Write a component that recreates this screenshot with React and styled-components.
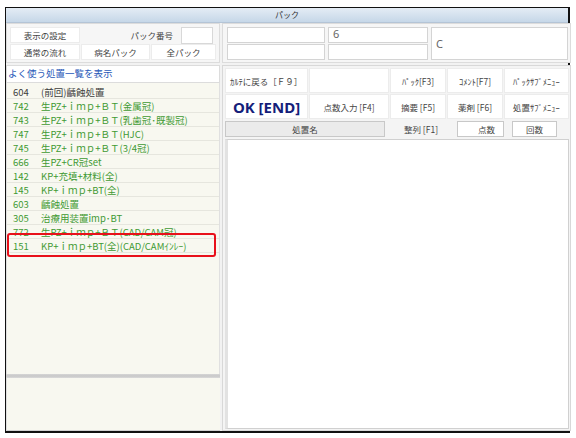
import React from "react";
import styled, { createGlobalStyle } from "styled-components";

const GlobalStyle = createGlobalStyle`
  html, body {
    margin: 0;
    padding: 0;
    background: #ffffff;
    font-family: "Noto Sans CJK JP", "Noto Sans", sans-serif;
  }
`;

const Page = styled.div`
  width: 576px;
  height: 438px;
  padding: 7px 0 0 5px;
  box-sizing: border-box;
`;

const Window = styled.div`
  position: relative;
  width: 565px;
  height: 426px;
  box-sizing: border-box;
  border: 1px solid #111;
  border-right-width: 2px;
  border-bottom-width: 2px;
  background: #f2f2f2;
  display: flex;
  flex-direction: column;
`;

const TitleBar = styled.div`
  height: 14px;
  background: linear-gradient(#e4ecf5, #c6d7e8);
  border-bottom: 1px solid #b4c4d6;
  font-size: 8px;
  line-height: 14px;
  color: #333;
  text-align: center;
`;

const Body = styled.div`
  flex: 1;
  display: flex;
  gap: 2px;
  min-height: 0;
`;

const LeftCol = styled.div`
  width: 214px;
  display: flex;
  flex-direction: column;
`;

const RightCol = styled.div`
  flex: 1;
  display: flex;
  flex-direction: column;
`;

const TopBlock = styled.div`
  height: 40px;
  box-sizing: border-box;
  border: 1px solid #dcdcdc;
  background: #f6f6f6;
  padding: 3px 2px 2px 3px;
  display: flex;
  flex-direction: column;
  gap: 1px;
`;

const TopRow = styled.div`
  display: flex;
  align-items: center;
  height: 16px;
`;

const FlatButton = styled.div`
  width: ${(p) => p.$w}px;
  height: 16px;
  box-sizing: border-box;
  background: #fff;
  border: 1px solid #ececec;
  font-size: 8.5px;
  color: #444;
  display: flex;
  align-items: center;
  justify-content: center;
  margin-right: 1px;
`;

const Label = styled.div`
  flex: 1;
  text-align: right;
  font-size: 8.5px;
  color: #444;
  padding-right: 8px;
`;

const SmallInput = styled.div`
  width: 32px;
  height: 17px;
  box-sizing: border-box;
  background: #fff;
  border: 1px solid #d8d8d8;
  margin-right: 4px;
`;

const ListHeader = styled.div`
  margin-top: 2px;
  height: 16px;
  background: #fff;
  border: 1px solid #dcdcdc;
  color: #2858b8;
  font-size: 9.5px;
  line-height: 15px;
  padding-left: 1px;
`;

const ListArea = styled.div`
  position: relative;
  flex: 1;
  background: #f8f8f0;
  border-left: 1px solid #e0e0e0;
  border-right: 1px solid #e0e0e0;
  padding-top: 2px;
`;

const Row = styled.div`
  height: 14px;
  display: flex;
  align-items: center;
  border-bottom: 1px solid #e6e6de;
  font-size: 9.5px;
  color: ${(p) => (p.$green ? "#3f9a33" : "#3c3c3c")};
  white-space: nowrap;
  overflow: hidden;
  box-sizing: border-box;
`;

const Code = styled.span`
  width: 34px;
  padding-left: 6px;
  box-sizing: border-box;
  flex-shrink: 0;
`;

const Highlight = styled.div`
  position: absolute;
  left: 0px;
  top: 150px;
  width: 209px;
  height: 24px;
  box-sizing: border-box;
  border: 2.5px solid #e8101a;
  border-radius: 3px;
`;

const Splitter = styled.div`
  height: 4px;
  background: linear-gradient(#d6d6d6, #c8c8c8, #dadada);
`;

const LowerArea = styled.div`
  height: 52px;
  background: #f8f8f0;
  border-bottom: 1px solid #d0d0d0;
  border-left: 1px solid #e0e0e0;
`;

const InfoBlock = styled.div`
  height: 40px;
  box-sizing: border-box;
  border: 1px solid #dcdcdc;
  background: #f6f6f6;
  padding: 3px 2px 2px 4px;
  display: flex;
  gap: 3px;
`;

const InfoStack = styled.div`
  width: ${(p) => p.$w}px;
  display: flex;
  flex-direction: column;
  gap: 1px;
`;

const InfoBox = styled.div`
  flex: ${(p) => (p.$grow ? 1 : "none")};
  height: ${(p) => (p.$grow ? "auto" : "16px")};
  box-sizing: border-box;
  background: #fff;
  border: 1px solid #d4d4d4;
  font-family: "Noto Sans", sans-serif;
  font-size: 11px;
  color: #666;
  padding-left: 4px;
  display: flex;
  align-items: ${(p) => (p.$grow ? "center" : "flex-start")};
  line-height: 12px;
`;

const CommandPanel = styled.div`
  margin-top: 2px;
  flex: 1;
  border: 1px solid #d8d8d8;
  padding: 2px 1px 1px 2px;
  display: flex;
  flex-direction: column;
  background: #f4f4f4;
`;

const ButtonGrid = styled.div`
  display: grid;
  grid-template-columns: 83px 80px 56px 56px 1fr;
  grid-template-rows: 25px 25px;
  gap: 1px;
`;

const CmdButton = styled.div`
  background: #fff;
  border: 1px solid #ececec;
  font-size: ${(p) => (p.$big ? "15px" : "8.5px")};
  font-weight: ${(p) => (p.$big ? 700 : 400)};
  color: ${(p) => (p.$big ? "#14207a" : "#444")};
  display: flex;
  align-items: center;
  justify-content: ${(p) => (p.$left ? "flex-start" : "center")};
  padding-left: ${(p) => (p.$left ? "4px" : "0")};
  white-space: nowrap;
  font-family: ${(p) =>
    p.$big ? '"Noto Sans", "Noto Sans CJK JP", sans-serif' : "inherit"};
`;

const ColumnBar = styled.div`
  margin-top: 2px;
  height: 16px;
  display: flex;
  align-items: stretch;
  gap: 2px;
`;

const ColHead = styled.div`
  width: ${(p) => p.$w}px;
  box-sizing: border-box;
  font-size: 8.5px;
  color: #444;
  display: flex;
  align-items: center;
  justify-content: ${(p) => p.$justify || "center"};
  padding-right: ${(p) => (p.$justify ? "8px" : "0")};
  background: ${(p) => (p.$shade ? "#ebebeb" : p.$boxed ? "#fff" : "transparent")};
  border: 1px solid ${(p) => (p.$shade || p.$boxed ? "#c8c8c8" : "transparent")};
  margin-left: ${(p) => p.$ml || 0}px;
`;

const Results = styled.div`
  margin-top: 2px;
  flex: 1;
  background: #fff;
  border: 1px solid #d0d0d0;
  border-left: 3px solid #e2e2e2;
`;

const items = [
  ["604", "(前回)齲蝕処置", false],
  ["742", "生PZ+ｉｍｐ+ＢＴ(金属冠)", true],
  ["743", "生PZ+ｉｍｐ+ＢＴ(乳歯冠･既製冠)", true],
  ["747", "生PZ+ｉｍｐ+ＢＴ(HJC)", true],
  ["745", "生PZ+ｉｍｐ+ＢＴ(3/4冠)", true],
  ["666", "生PZ+CR冠set", true],
  ["142", "KP+充填+材料(全)", true],
  ["145", "KP+ｉｍｐ+BT(全)", true],
  ["603", "齲蝕処置", true],
  ["305", "治療用装置imp･BT", true],
  ["772", "生PZ+ｉｍｐ+ＢＴ(CAD/CAM冠)", true],
  ["151", "KP+ｉｍｐ+BT(全)(CAD/CAMｲﾝﾚｰ)", true],
];

export default function App() {
  return (
    <>
      <GlobalStyle />
      <Page>
        <Window>
          <TitleBar>パック</TitleBar>
          <Body>
            <LeftCol>
              <TopBlock>
                <TopRow>
                  <FlatButton $w={70}>表示の設定</FlatButton>
                  <Label>パック番号</Label>
                  <SmallInput />
                </TopRow>
                <TopRow>
                  <FlatButton $w={71}>通常の流れ</FlatButton>
                  <FlatButton $w={70}>病名パック</FlatButton>
                  <FlatButton $w={66}>全パック</FlatButton>
                </TopRow>
              </TopBlock>
              <ListHeader>よく使う処置一覧を表示</ListHeader>
              <ListArea>
                {items.map(([code, name, green]) => (
                  <Row key={code} $green={green}>
                    <Code>{code}</Code>
                    {name}
                  </Row>
                ))}
                <Highlight />
              </ListArea>
              <Splitter />
              <LowerArea />
            </LeftCol>
            <RightCol>
              <InfoBlock>
                <InfoStack $w={98}>
                  <InfoBox />
                  <InfoBox />
                </InfoStack>
                <InfoStack $w={100}>
                  <InfoBox>6</InfoBox>
                  <InfoBox />
                </InfoStack>
                <InfoStack $w={137}>
                  <InfoBox $grow>C</InfoBox>
                </InfoStack>
              </InfoBlock>
              <CommandPanel>
                <ButtonGrid>
                  <CmdButton $left>ｶﾙﾃに戻る［Ｆ９］</CmdButton>
                  <CmdButton />
                  <CmdButton>ﾊﾟｯｸ[F3]</CmdButton>
                  <CmdButton>ｺﾒﾝﾄ[F7]</CmdButton>
                  <CmdButton>ﾊﾟｯｸｻﾌﾞﾒﾆｭｰ</CmdButton>
                  <CmdButton $big>OK [END]</CmdButton>
                  <CmdButton>点数入力 [F4]</CmdButton>
                  <CmdButton>摘要 [F5]</CmdButton>
                  <CmdButton>薬剤 [F6]</CmdButton>
                  <CmdButton>処置ｻﾌﾞﾒﾆｭｰ</CmdButton>
                </ButtonGrid>
                <ColumnBar>
                  <ColHead $w={160} $shade>処置名</ColHead>
                  <ColHead $w={68}>整列 [F1]</ColHead>
                  <ColHead $w={47} $boxed $justify="flex-end">点数</ColHead>
                  <ColHead $w={45} $boxed $ml={6}>回数</ColHead>
                </ColumnBar>
                <Results />
              </CommandPanel>
            </RightCol>
          </Body>
        </Window>
      </Page>
    </>
  );
}
